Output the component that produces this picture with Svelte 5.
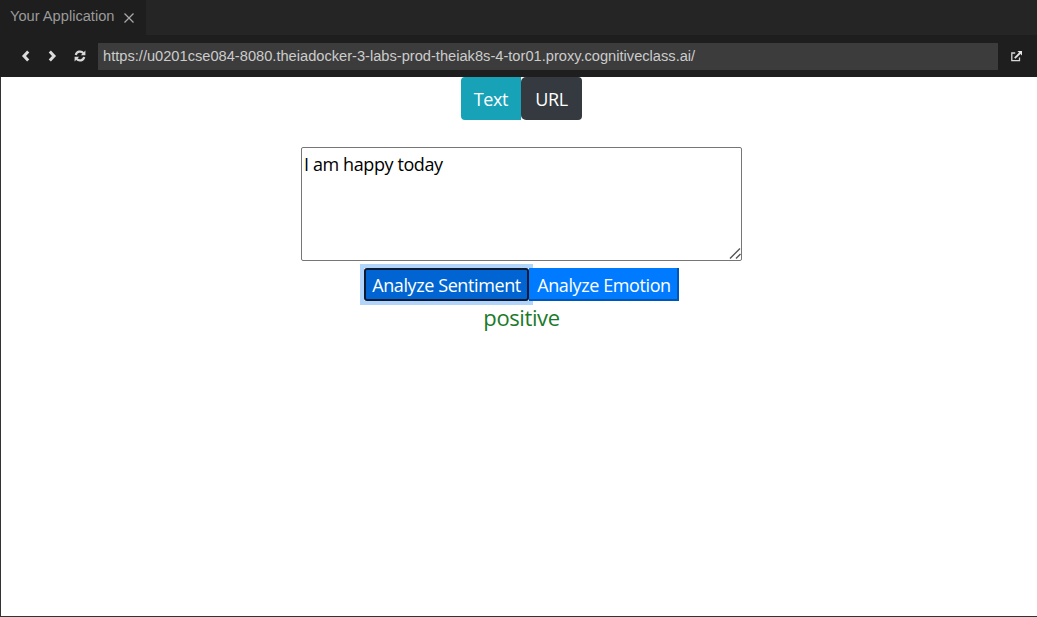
<script lang="ts">
	let mode = $state('text')
	let text = $state('I am happy today')
	let result = $state('positive')
</script>

<div class="window">
	<div class="tabbar">
		<div class="tab">
			<span class="tab-label">Your Application</span>
			<svg class="tab-close" width="12" height="12" viewBox="0 0 12 12">
				<path d="M1.5 1.5l9 9M10.5 1.5l-9 9" stroke="#a8a8a8" stroke-width="1.3" fill="none" />
			</svg>
		</div>
	</div>
	<div class="toolbar">
		<svg class="nav-icon" width="10" height="12" viewBox="0 0 10 12">
			<path d="M7.2 1.5L3 6l4.2 4.5" stroke="#dcdcdc" stroke-width="3" fill="none" />
		</svg>
		<svg class="nav-icon next" width="10" height="12" viewBox="0 0 10 12">
			<path d="M2.8 1.5L7 6l-4.2 4.5" stroke="#dcdcdc" stroke-width="3" fill="none" />
		</svg>
		<svg class="nav-icon reload" width="12" height="12" viewBox="0 0 12 12">
			<path d="M1.8 5A4.3 4.3 0 0 1 9.4 3.2" stroke="#d8d8d8" stroke-width="2.2" fill="none" />
			<path d="M10.2 7A4.3 4.3 0 0 1 2.6 8.8" stroke="#d8d8d8" stroke-width="2.2" fill="none" />
			<path d="M11.4 .6V5.2H6.8zM.6 11.4V6.8h4.6z" fill="#d8d8d8" />
		</svg>
		<div class="url">https://u0201cse084-8080.theiadocker-3-labs-prod-theiak8s-4-tor01.proxy.cognitiveclass.ai/</div>
		<svg class="external" width="13" height="13" viewBox="0 0 13 13">
			<path d="M9.5 7.5v3.2H1.8V3h3.4" stroke="#d6d6d6" stroke-width="1.3" fill="none" />
			<path d="M4.8 8.2L10 3" stroke="#e6e6e6" stroke-width="1.8" fill="none" />
			<path d="M7.4 1h4.6v4.6z" fill="#e6e6e6" />
		</svg>
	</div>

	<main class="page">
		<div class="mode-group">
			<button class="mode text" onclick={() => (mode = 'text')}>Text</button>
			<button class="mode url-mode" onclick={() => (mode = 'url')}>URL</button>
		</div>
		<div class="input-wrap">
			<textarea class="input" bind:value={text}></textarea>
			<svg class="grip" width="14" height="14" viewBox="0 0 14 14">
				<path d="M2 12.5L12 2.5M8 12.5L12.5 8" stroke="#555" stroke-width="1.4" fill="none" />
			</svg>
		</div>
		<div class="actions">
			<button class="action focused">Analyze Sentiment</button>
			<button class="action">Analyze Emotion</button>
		</div>
		<div class="result">{result}</div>
	</main>
</div>

<style>
	:global(body) {
		margin: 0;
		background: #fff;
	}

	.window {
		display: flex;
		flex-direction: column;
		height: 617px;
		box-sizing: border-box;
		overflow: hidden;
	}

	.tabbar {
		display: flex;
		height: 35px;
		background: #252526;
		flex-shrink: 0;
	}

	.tab {
		display: flex;
		align-items: center;
		gap: 9px;
		width: 146px;
		box-sizing: border-box;
		padding: 0 0 3px 10px;
		background: #1e1e1e;
		font-family: "Liberation Sans", sans-serif;
		font-size: 14.65px;
		color: #9a9a9a;
		white-space: nowrap;
	}

	.tab-close {
		margin-top: 3px;
		flex-shrink: 0;
	}

	.toolbar {
		display: flex;
		align-items: center;
		height: 42px;
		background: #1e1e1e;
		flex-shrink: 0;
		padding-left: 21px;
		box-sizing: border-box;
	}

	.nav-icon {
		flex-shrink: 0;
	}

	.next {
		margin-left: 16px;
	}

	.reload {
		margin-left: 17px;
	}

	.url {
		width: 900px;
		height: 27px;
		margin-left: 12px;
		padding-left: 5px;
		box-sizing: border-box;
		background: #3c3c3c;
		color: #cccccc;
		font-family: "Liberation Sans", sans-serif;
		font-size: 14.65px;
		line-height: 27px;
		white-space: nowrap;
		flex-shrink: 0;
	}

	.external {
		margin-left: 12px;
		flex-shrink: 0;
	}

	.page {
		flex: 1;
		display: flex;
		flex-direction: column;
		align-items: center;
		box-sizing: border-box;
		padding-left: 5px;
		border-left: 1px solid #333;
		border-bottom: 1px solid #333;
		font-family: "Open Sans", sans-serif;
		background: #fff;
	}

	.mode-group {
		display: flex;
		height: 43px;
	}

	button {
		font-family: inherit;
		cursor: pointer;
	}

	.mode {
		border: none;
		color: #fff;
		font-size: 18px;
		letter-spacing: -0.4px;
		border-radius: 4px;
		padding: 0;
	}

	.mode.text {
		width: 60px;
		background: #17a2b8;
		border-top-right-radius: 0;
		border-bottom-right-radius: 0;
	}

	.mode.url-mode {
		width: 61px;
		background: #343a40;
		border-top-left-radius: 5px;
		border-bottom-left-radius: 5px;
	}

	.input-wrap {
		position: relative;
		display: flex;
		margin-top: 27px;
	}

	.input {
		width: 441px;
		height: 114px;
		box-sizing: border-box;
		padding: 4px 2px 2px;
		border: 1px solid #767676;
		border-radius: 2px;
		font-family: "Open Sans", sans-serif;
		font-size: 18px;
		letter-spacing: -0.4px;
		line-height: 25px;
		color: #000;
		outline: none;
		resize: none;
	}

	.grip {
		position: absolute;
		right: 0;
		bottom: 1px;
		pointer-events: none;
	}

	.actions {
		display: flex;
		margin-top: 7px;
		height: 33px;
	}

	.action {
		position: relative;
		width: 150px;
		height: 33px;
		padding: 2px 0 0 2px;
		border: none;
		border-right: 2px solid #0056b3;
		border-bottom: 2px solid #0056b3;
		background: #007bff;
		color: #fff;
		font-size: 18px;
		letter-spacing: -0.4px;
		white-space: nowrap;
	}

	.action.focused {
		width: 165px;
		padding: 0;
		background: #0065d2;
		border: 2px solid #0b1a33;
		border-radius: 3px;
	}

	.action.focused::before {
		content: "";
		position: absolute;
		inset: -2px;
		box-shadow: 0 0 0 4px #b0d4fa;
	}

	.result {
		color: #1a7a2a;
		font-size: 22px;
		letter-spacing: -0.4px;
		line-height: 33px;
	}
</style>
